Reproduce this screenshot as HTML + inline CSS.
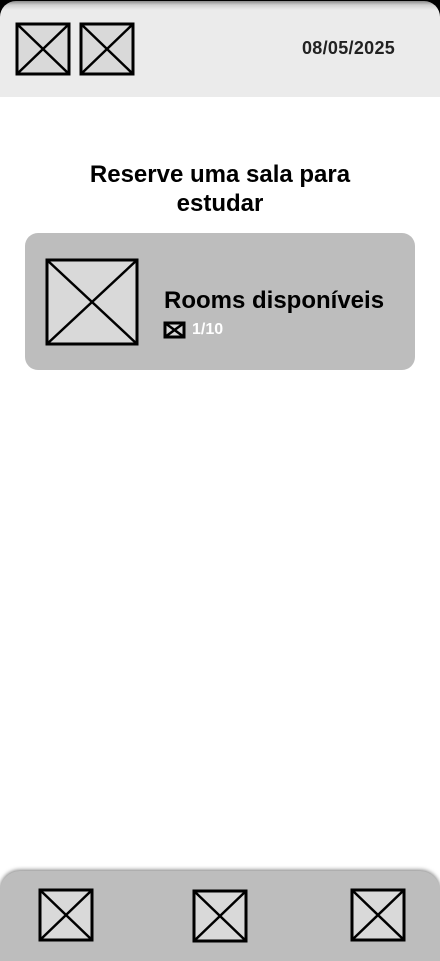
<!DOCTYPE html>
<html><head><meta charset="utf-8"><style>
html,body{margin:0;padding:0;}
body{width:440px;height:956px;position:relative;overflow:hidden;background:#fff;font-family:"Liberation Sans",sans-serif;}
.topbg{position:absolute;left:0;top:0;width:440px;height:40px;background:#000;}
.header{position:absolute;left:0;top:1px;width:440px;height:96px;background:linear-gradient(#8a8a8a 0px,#d0d0d0 4px,#ebebeb 9px);border-radius:16px 16px 0 0;}
.white{position:absolute;left:0;top:97px;width:440px;height:859px;background:#fff;}
svg.x{position:absolute;overflow:visible}
.date{position:absolute;left:302px;top:38px;font-size:18px;font-weight:bold;color:#222;letter-spacing:0.3px;line-height:20px}
.title{position:absolute;left:0;width:440px;top:160px;text-align:center;font-size:24px;font-weight:bold;line-height:29px;color:#000}
.card{position:absolute;left:25px;top:233px;width:390px;height:137px;background:#bdbdbd;border-radius:13px}
.rooms{position:absolute;left:164px;top:287px;font-size:24px;font-weight:bold;color:#000}
.cnt{position:absolute;left:192px;top:321px;font-size:16px;font-weight:bold;color:#fff}
.bottom{position:absolute;left:0;top:871px;width:440px;height:90px;background:#bdbdbd;border-radius:20px 20px 0 0;box-shadow:0 -1px 4px #777}
</style></head><body>
<div class="topbg"></div>
<div class="header"></div>
<div class="white"></div>
<svg class="x" style="left:16px;top:23px" width="54" height="52"><rect x="1" y="1" width="52" height="50" fill="#d9d9d9" stroke="#000" stroke-width="3"/><path d="M1 1L53 51M53 1L1 51" stroke="#000" stroke-width="2.5"/></svg>
<svg class="x" style="left:80px;top:23px" width="54" height="52"><rect x="1" y="1" width="52" height="50" fill="#d9d9d9" stroke="#000" stroke-width="3"/><path d="M1 1L53 51M53 1L1 51" stroke="#000" stroke-width="2.5"/></svg>
<div class="date">08/05/2025</div>
<div class="title">Reserve uma sala para<br>estudar</div>
<div class="card"></div>
<svg class="x" style="left:46px;top:259px" width="92" height="86"><rect x="1" y="1" width="90" height="84" fill="#d9d9d9" stroke="#000" stroke-width="3"/><path d="M1 1L91 85M91 1L1 85" stroke="#000" stroke-width="2.5"/></svg>
<div class="rooms">Rooms disponíveis</div>
<svg class="x" style="left:164px;top:322px" width="21" height="16"><rect x="1" y="1" width="19" height="14" fill="#d9d9d9" stroke="#000" stroke-width="3"/><path d="M1 1L20 15M20 1L1 15" stroke="#000" stroke-width="2.5"/></svg>
<div class="cnt">1/10</div>
<div class="bottom"></div>
<svg class="x" style="left:39px;top:889px" width="54" height="52"><rect x="1" y="1" width="52" height="50" fill="#d9d9d9" stroke="#000" stroke-width="3"/><path d="M1 1L53 51M53 1L1 51" stroke="#000" stroke-width="2.5"/></svg>
<svg class="x" style="left:193px;top:890px" width="54" height="52"><rect x="1" y="1" width="52" height="50" fill="#d9d9d9" stroke="#000" stroke-width="3"/><path d="M1 1L53 51M53 1L1 51" stroke="#000" stroke-width="2.5"/></svg>
<svg class="x" style="left:351px;top:889px" width="54" height="52"><rect x="1" y="1" width="52" height="50" fill="#d9d9d9" stroke="#000" stroke-width="3"/><path d="M1 1L53 51M53 1L1 51" stroke="#000" stroke-width="2.5"/></svg>
</body></html>
